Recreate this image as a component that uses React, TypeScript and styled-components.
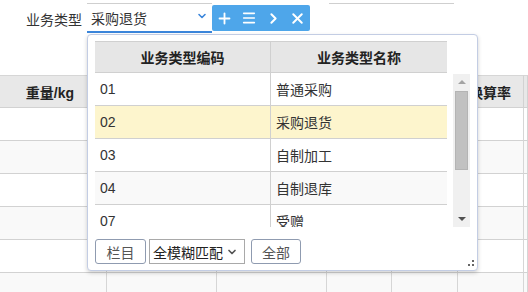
import * as React from 'react';
import styled, { createGlobalStyle } from 'styled-components';
import { Plus, Menu, ChevronRight, X, ChevronDown } from 'lucide-react';

const GlobalStyle = createGlobalStyle`
    html, body {
        margin: 0;
        padding: 0;
        background: #ffffff;
    }
    body {
        font-family: "Liberation Sans", "Noto Sans CJK SC", sans-serif;
        font-size: 14px;
        color: #333;
    }
`;

const Page = styled.div`
    position: relative;
    width: 528px;
    height: 292px;
    overflow: hidden;
    display: flex;
    flex-direction: column;

    & > * {
        flex-shrink: 0;
    }
`;

const PrevRow = styled.div`
    display: flex;
    height: 4px;
`;

const GhostField = styled.div<{ $left: number; $width: number }>`
    margin-left: ${(p) => p.$left}px;
    width: ${(p) => p.$width}px;
    border-bottom: 1px solid #cfcfcf;
`;

const FormRow = styled.div`
    display: flex;
    align-items: flex-start;
    margin-top: 1px;
    height: 70px;
`;

const Label = styled.span`
    margin-left: 26px;
    width: 61px;
    margin-top: 6px;
    line-height: 18px;
    color: #333;
`;

const Field = styled.div`
    box-sizing: border-box;
    width: 125px;
    height: 28px;
    display: flex;
    align-items: center;
    padding: 0 4px 0 4px;
    border-bottom: 2px solid #3b86db;
`;

const FieldText = styled.span`
    flex: 1;
    line-height: 18px;
    margin-top: 1px;
    color: #333;
`;

const ActionGroup = styled.div`
    display: flex;
    width: 98px;
    height: 26px;
    background: #4ea6ea;
    border-radius: 2px;
`;

const ActionButton = styled.div`
    flex: 1;
    display: flex;
    align-items: center;
    justify-content: center;
    color: #fff;
`;

const Grid = styled.div`
    display: grid;
    grid-template-columns: 107px 110px 110px 65px 66px 66px 1fr;
`;

const HeadCell = styled.div<{ $align?: string; $pad?: number }>`
    box-sizing: border-box;
    height: 33px;
    display: flex;
    align-items: center;
    justify-content: ${(p) => p.$align || 'center'};
    padding-right: ${(p) => p.$pad || 0}px;
    background: #e8e8e8;
    border-top: 1px solid #d6d6d6;
    border-bottom: 1px solid #d2d2d2;
    border-right: 1px solid #d2d2d2;
    font-weight: bold;
    color: #222;
`;

const BodyCell = styled.div<{ $odd: boolean }>`
    box-sizing: border-box;
    height: 33px;
    background: ${(p) => (p.$odd ? '#f9f9f9' : '#ffffff')};
    border-bottom: 1px solid #d2d2d2;
    border-right: 1px solid #d6d6d6;
`;

const Dropdown = styled.div`
    position: absolute;
    left: 87px;
    top: 34px;
    box-sizing: border-box;
    width: 391px;
    height: 237px;
    padding: 6px 7px 0 7px;
    background: #fff;
    border: 1px solid #c3cde4;
    border-radius: 4px;
    box-shadow: 0 2px 4px rgba(0, 0, 0, 0.18);
    display: flex;
    flex-direction: column;
`;

const ListArea = styled.div`
    display: flex;
    gap: 6px;
    height: 186px;
`;

const Table = styled.div`
    width: 352px;
    display: flex;
    flex-direction: column;
`;

const TableHead = styled.div`
    display: grid;
    grid-template-columns: 175px 177px;
    height: 32px;
    flex-shrink: 0;
    box-sizing: border-box;
    background: #e6e6e6;
    border-top: 1px solid #d0d0d0;
    border-bottom: 1px solid #d0d0d0;
`;

const TH = styled.div<{ $divider?: boolean }>`
    display: flex;
    align-items: center;
    justify-content: center;
    font-weight: bold;
    color: #222;
    border-left: ${(p) => (p.$divider ? '1px solid #d0d0d0' : 'none')};
`;

const TableBody = styled.div`
    flex: 1;
    overflow: hidden;
`;

const Row = styled.div<{ $bg: string }>`
    display: grid;
    grid-template-columns: 175px 177px;
    height: 33px;
    box-sizing: border-box;
    background: ${(p) => p.$bg};
    border-bottom: 1px solid #d0d0d0;
`;

const TD = styled.div<{ $divider?: boolean }>`
    display: flex;
    align-items: center;
    padding-left: 5px;
    color: #333;
    border-left: ${(p) => (p.$divider ? '1px solid #d0d0d0' : 'none')};
`;

const Scrollbar = styled.div`
    width: 17px;
    margin-top: 33px;
    height: 153px;
    background: #f0f0f0;
    display: flex;
    flex-direction: column;
    align-items: center;
`;

const ScrollArrow = styled.div<{ $down?: boolean; $color: string }>`
    width: 0;
    height: 0;
    margin: ${(p) => (p.$down ? '0 0 6px 0' : '6px 0 0 0')};
    border-left: 4px solid transparent;
    border-right: 4px solid transparent;
    ${(p) => (p.$down ? `border-top: 4px solid ${p.$color};` : `border-bottom: 4px solid ${p.$color};`)}
`;

const ScrollThumb = styled.div`
    width: 13px;
    height: 79px;
    margin-top: 7px;
    background: #c1c1c1;
    border: 1px solid #b4b4b4;
    box-sizing: border-box;
`;

const ScrollSpacer = styled.div`
    flex: 1;
`;

const Footer = styled.div`
    display: flex;
    align-items: center;
    gap: 3px;
    margin-top: 12px;
    height: 25px;
`;

const FooterButton = styled.div<{ $width: number }>`
    box-sizing: border-box;
    width: ${(p) => p.$width}px;
    height: 25px;
    display: flex;
    align-items: center;
    justify-content: center;
    border: 1px solid #8f9bb0;
    border-radius: 3px;
    color: #555;
    background: #fff;
`;

const Select = styled.div`
    box-sizing: border-box;
    width: 96px;
    height: 25px;
    display: flex;
    align-items: center;
    padding-left: 3px;
    gap: 3px;
    border: 1px solid #a9a9a9;
    color: #222;
    margin-right: 3px;
`;

const Grip = styled.svg`
    position: absolute;
    right: 3px;
    bottom: 4px;
`;

const columns = [107, 110, 110, 65, 66, 66, 0];

const rows = [
    { code: '01', name: '普通采购', bg: '#ffffff' },
    { code: '02', name: '采购退货', bg: '#fdf5cd' },
    { code: '03', name: '自制加工', bg: '#ffffff' },
    { code: '04', name: '自制退库', bg: '#f9f9f9' },
    { code: '07', name: '受赠', bg: '#ffffff' },
];

export default function App() {
    return (
        <Page>
            <GlobalStyle />
            <PrevRow>
                <GhostField $left={87} $width={125} />
                <GhostField $left={117} $width={125} />
            </PrevRow>
            <FormRow>
                <Label>业务类型</Label>
                <Field>
                    <FieldText>采购退货</FieldText>
                    <ChevronDown size={12} strokeWidth={3.2} color="#3b86db" style={{ marginTop: -4 }} />
                </Field>
                <ActionGroup>
                    <ActionButton><Plus size={17} strokeWidth={2.6} /></ActionButton>
                    <ActionButton><Menu size={16} strokeWidth={2.4} /></ActionButton>
                    <ActionButton><ChevronRight size={17} strokeWidth={2.8} /></ActionButton>
                    <ActionButton><X size={17} strokeWidth={2.8} /></ActionButton>
                </ActionGroup>
            </FormRow>
            <Grid>
                {columns.map((_, i) => (
                    <HeadCell
                        key={`h${i}`}
                        $align={i === 0 || i === 5 ? 'flex-end' : 'center'}
                        $pad={i === 0 ? 32 : i === 5 ? 12 : 0}
                    >
                        {i === 0 ? '重量/kg' : i === 5 ? '换算率' : ''}
                    </HeadCell>
                ))}
                {[0, 1, 2, 3, 4, 5].map((r) =>
                    columns.map((_, i) => <BodyCell key={`${r}-${i}`} $odd={r % 2 === 1} />)
                )}
            </Grid>
            <Dropdown>
                <ListArea>
                    <Table>
                        <TableHead>
                            <TH>业务类型编码</TH>
                            <TH $divider>业务类型名称</TH>
                        </TableHead>
                        <TableBody>
                            {rows.map((r) => (
                                <Row key={r.code} $bg={r.bg}>
                                    <TD>{r.code}</TD>
                                    <TD $divider>{r.name}</TD>
                                </Row>
                            ))}
                        </TableBody>
                    </Table>
                    <Scrollbar>
                        <ScrollArrow $color="#a3a3a3" />
                        <ScrollThumb />
                        <ScrollSpacer />
                        <ScrollArrow $down $color="#505050" />
                    </Scrollbar>
                </ListArea>
                <Footer>
                    <FooterButton $width={51}>栏目</FooterButton>
                    <Select>
                        全模糊匹配
                        <ChevronDown size={12} strokeWidth={3.4} color="#555" />
                    </Select>
                    <FooterButton $width={50}>全部</FooterButton>
                </Footer>
                <Grip width="6" height="6" viewBox="0 0 6 6">
                    <rect x="4" y="0" width="2" height="2" fill="#666" />
                    <rect x="0" y="4" width="2" height="2" fill="#666" />
                    <rect x="4" y="4" width="2" height="2" fill="#666" />
                </Grip>
            </Dropdown>
        </Page>
    );
}
